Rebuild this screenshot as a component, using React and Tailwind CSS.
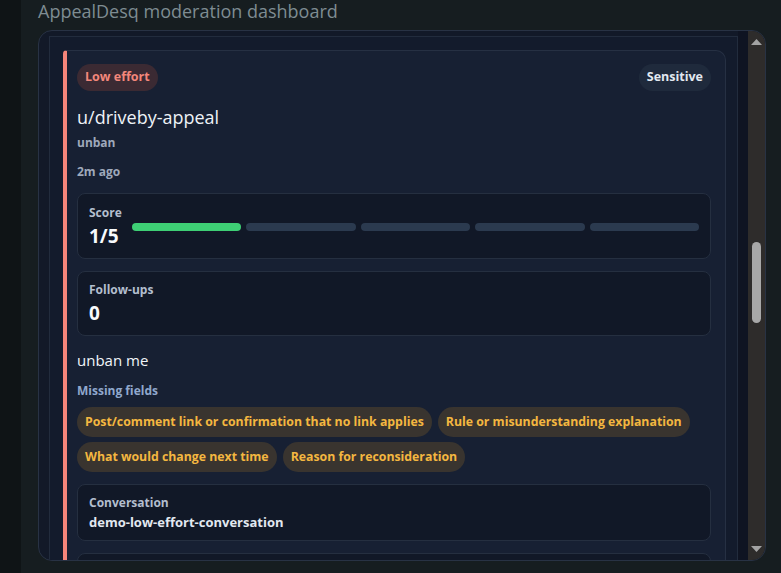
import React from 'react';

const chips = [
    'Post/comment link or confirmation that no link applies',
    'Rule or misunderstanding explanation',
    'What would change next time',
    'Reason for reconsideration',
];

const StatBox = ({ children, className = '' }) => (
    <div className={`rounded-lg border border-[#252f40] bg-[#111827] px-[11px] ${className}`}>
        {children}
    </div>
);

const ScoreBar = ({ score, max }) => (
    <div className="flex flex-1 gap-[5px]">
        {Array.from({ length: max }).map((_, i) => (
            <div
                key={i}
                className={i < score ? 'h-2 flex-1 rounded-full bg-[#3ecf75]' : 'h-2 flex-1 rounded-full bg-[#2b3a4f]'}
            />
        ))}
    </div>
);

const App = () => {
    return (
        <div
            className="flex h-[573px] w-[781px] overflow-hidden bg-[#161d20]"
            style={{ fontFamily: '"Open Sans", "Noto Sans", sans-serif' }}
        >
            {/* left edge strip */}
            <div className="w-[21px] shrink-0 bg-[#0f1416]" />

            <div className="flex flex-1 flex-col pl-[17px] pr-[15px]">
                <h1 className="h-[30px] text-[18px] leading-[22px] font-normal text-[#7e8c92]">
                    AppealDesq moderation dashboard
                </h1>

                {/* scroll box */}
                <div className="flex h-[531px] overflow-hidden rounded-[14px] border border-[#283244] bg-[#121928]">
                    <div className="flex flex-1 flex-col overflow-hidden pl-[10px] pt-[5px]">
                        <div className="flex-1 border-l border-r border-t border-[#222c3d] bg-[#131b2c] pl-[13px] pr-[11px] pt-[13px]">
                            {/* card */}
                            <div className="rounded-tr-[10px] rounded-tl-[4px] border-l-4 border-t border-r border-[#263043] border-l-[#f5857a] bg-[#172033] pl-[10px] pr-[14px] pt-[13px] pb-6">
                                <div className="flex items-center justify-between">
                                    <span className="flex h-[27px] items-center rounded-full bg-[#3b2a33] px-[8px] text-[12.5px] font-bold text-[#f3877b]">
                                        Low effort
                                    </span>
                                    <span className="flex h-[27px] items-center rounded-full bg-[#1f2a3c] px-[8px] text-[12.5px] font-bold text-[#e2e8f0]">
                                        Sensitive
                                    </span>
                                </div>

                                <div className="mt-[14px] text-[18px] leading-[24px] text-[#eef2f7]">u/driveby-appeal</div>
                                <div className="mt-[6px] text-[12px] leading-4 font-bold text-[#9fa9bb]">unban</div>
                                <div className="mt-[13px] text-[12px] leading-4 font-bold text-[#9fa9bb]">2m ago</div>

                                <StatBox className="mt-[13px] flex items-center gap-[10px] pt-[11px] pb-[10px]">
                                    <div className="flex flex-col">
                                        <span className="text-[12px] leading-4 font-bold text-[#b3bece]">Score</span>
                                        <span className="mt-[3px] text-[19px] leading-6 font-bold text-[#f8fafc]">1/5</span>
                                    </div>
                                    <ScoreBar score={1} max={5} />
                                </StatBox>

                                <StatBox className="mt-[12px] flex flex-col pt-[10px] pb-[10px]">
                                    <span className="text-[12px] leading-4 font-bold text-[#b3bece]">Follow-ups</span>
                                    <span className="mt-[3px] text-[19px] leading-6 font-bold text-[#f8fafc]">0</span>
                                </StatBox>

                                <div className="mt-[13px] text-[15px] leading-[22px] text-[#f1f5f9]">unban me</div>
                                <div className="mt-[12px] text-[12px] leading-4 font-bold text-[#90a8cd]">Missing fields</div>

                                <div className="mt-[8px] flex flex-wrap gap-x-[6px] gap-y-[5px]">
                                    {chips.map((c) => (
                                        <span
                                            key={c}
                                            className="flex h-[30px] items-center rounded-full bg-[#39342f] px-[8px] text-[12.3px] font-bold text-[#f4b740]"
                                        >
                                            {c}
                                        </span>
                                    ))}
                                </div>

                                <StatBox className="mt-[12px] flex flex-col pt-[10px] pb-[10px]">
                                    <span className="text-[12px] leading-4 font-bold text-[#b3bece]">Conversation</span>
                                    <span className="mt-[3px] text-[13px] leading-4 font-bold text-[#e2e8f0]">
                                        demo-low-effort-conversation
                                    </span>
                                </StatBox>

                                <StatBox className="mt-[12px] h-[57px]" />
                            </div>
                        </div>
                    </div>

                    {/* gutter + scrollbar */}
                    <div className="w-[10px] shrink-0 bg-[#0f1422]" />
                    <div className="flex w-[17px] shrink-0 flex-col items-center justify-between bg-[#2e2c2b] py-[8px]">
                        <svg width="11" height="6" viewBox="0 0 11 6">
                            <path d="M5.5 0 L11 6 L0 6 Z" fill="#a3a3a3" />
                        </svg>
                        <div className="flex flex-1 flex-col pt-[197px]">
                            <div className="h-[81px] w-[9px] rounded-full bg-[#a8a8a8]" />
                        </div>
                        <svg width="11" height="6" viewBox="0 0 11 6">
                            <path d="M0 0 L11 0 L5.5 6 Z" fill="#a3a3a3" />
                        </svg>
                    </div>
                </div>
            </div>
        </div>
    );
};

export default App;
